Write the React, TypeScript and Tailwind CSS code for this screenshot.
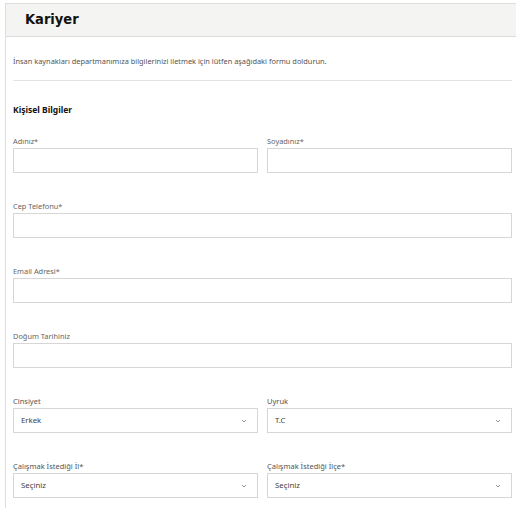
import React from 'react';

const Field: React.FC<{ label: string; className?: string }> = ({ label, className }) => (
  <div className={className}>
    <div className="h-[10px] leading-[10px] text-[7.4px] text-[#666] mb-[2px]">{label}</div>
    <div className="h-[25px] border border-[#d6d6d6] bg-white" />
  </div>
);

const SelectField: React.FC<{ label: string; value: string }> = ({ label, value }) => (
  <div>
    <div className="h-[10px] leading-[10px] text-[7.5px] text-[#555] mb-[2px]">{label}</div>
    <div className="h-[25px] border border-[#d6d6d6] bg-white flex items-center justify-between pl-[7px] pr-[10px]">
      <span className="text-[7.8px] text-[#444]">{value}</span>
      <svg width="6" height="4" viewBox="0 0 6 4" fill="none" stroke="#888" strokeWidth="0.9">
        <path d="M1 1l2 2 2-2" />
      </svg>
    </div>
  </div>
);

const App: React.FC = () => {
  return (
    <div className="w-[516px] h-[508px] bg-white overflow-hidden pt-[3px] pl-[5px]" style={{ fontFamily: '"Noto Sans", Arial, sans-serif' }}>
      <div className="border-l border-t border-[#dedede] h-full">
        <div className="h-[33px] bg-[#f4f4f2] border-b border-[#dcdcdc] flex items-center pl-[19px]">
          <h1 className="text-[14.5px] font-bold text-[#111]" style={{ fontFamily: '"DejaVu Sans Condensed", "DejaVu Sans", sans-serif' }}>
            Kariyer
          </h1>
        </div>
        <div className="pl-[7px] pr-[4px] pt-[19px]">
          <p className="h-[10px] leading-[10px] text-[7.4px] text-[#555]">
            İnsan kaynakları departmanımıza bilgilerinizi iletmek için lütfen aşağıdaki formu doldurun.
          </p>
          <div className="mt-[14px] border-t border-[#e2e2e2]" />
          <h2 className="mt-[23px] h-[12px] leading-[12px] text-[8.5px] font-bold text-[#111]">Kişisel Bilgiler</h2>
          <div className="mt-[20px] flex flex-col gap-[28px]">
            <div className="grid grid-cols-2 gap-[9px]">
              <Field label="Adınız*" />
              <Field label="Soyadınız*" />
            </div>
            <Field label="Cep Telefonu*" />
            <Field label="Email Adresi*" />
            <Field label="Doğum Tarihiniz" />
            <div className="grid grid-cols-2 gap-[9px]">
              <SelectField label="Cinsiyet" value="Erkek" />
              <SelectField label="Uyruk" value="T.C" />
            </div>
            <div className="grid grid-cols-2 gap-[9px]">
              <SelectField label="Çalışmak İstediği İl*" value="Seçiniz" />
              <SelectField label="Çalışmak İstediği İlçe*" value="Seçiniz" />
            </div>
          </div>
        </div>
      </div>
    </div>
  );
};

export default App;
